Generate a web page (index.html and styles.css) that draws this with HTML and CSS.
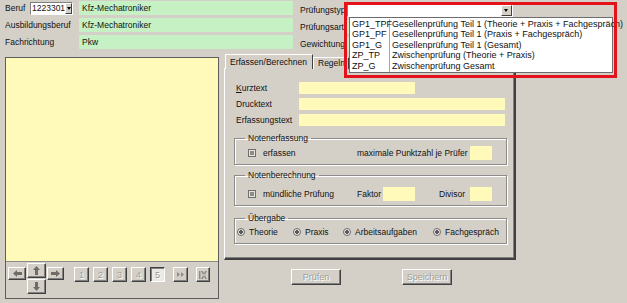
FILE: index.html
```html
<!DOCTYPE html>
<html lang="de">
  <head>
    <meta charset="UTF-8" />
    <title>Prüfungen</title>
    <link rel="stylesheet" href="styles.css">
  </head>
  <body>
    <div class="top">
      <div class="head-left">
        <div class="row">
          <span class="lbl lbl-short">Beruf</span>
          <span class="select">
            <span class="select-val">1223301</span>
            <span class="drop-btn small"><i class="tri"></i></span>
          </span>
          <span class="field green">Kfz-Mechatroniker</span>
        </div>
        <div class="row">
          <span class="lbl">Ausbildungsberuf</span>
          <span class="field green">Kfz-Mechatroniker</span>
        </div>
        <div class="row">
          <span class="lbl">Fachrichtung</span>
          <span class="field green">Pkw</span>
        </div>
      </div>
      <div class="head-right">
        <div class="row">
          <span class="lbl lbl-right">Prüfungstyp</span>
          <div class="combo">
            <span class="combo-val"></span>
            <span class="drop-btn"><i class="tri"></i></span>
            <div class="popup">
              <div class="codes">
                <div>GP1_TPF</div>
                <div>GP1_PF</div>
                <div>GP1_G</div>
                <div>ZP_TP</div>
                <div>ZP_G</div>
              </div>
              <div class="names">
                <div>Gesellenprüfung Teil 1 (Theorie + Praxis + Fachgespräch)</div>
                <div>Gesellenprüfung Teil 1 (Praxis + Fachgespräch)</div>
                <div>Gesellenprüfung Teil 1 (Gesamt)</div>
                <div>Zwischenprüfung (Theorie + Praxis)</div>
                <div>Zwischenprüfung Gesamt</div>
              </div>
            </div>
            <div class="highlight"></div>
          </div>
        </div>
        <div class="row">
          <span class="lbl lbl-right">Prüfungsart</span>
          <span class="field green wide"></span>
        </div>
        <div class="row">
          <span class="lbl lbl-right">Gewichtung</span>
          <span class="field green wide"></span>
        </div>
      </div>
    </div>

    <div class="main">
      <div class="list-panel">
        <div class="list-area"></div>
        <div class="nav">
          <div class="arrows">
            <span class="btn arrow-side">
              <svg width="9" height="7" viewBox="0 0 9 7"><path d="M0 3.5 L4 0 L4 2 L9 2 L9 5 L4 5 L4 7 Z" /></svg>
            </span>
            <span class="arrow-mid">
              <span class="btn arrow-v">
                <svg width="7" height="9" viewBox="0 0 7 9"><path d="M3.5 0 L7 4 L5 4 L5 9 L2 9 L2 4 L0 4 Z" /></svg>
              </span>
              <span class="btn arrow-v">
                <svg width="7" height="9" viewBox="0 0 7 9"><path d="M3.5 9 L7 5 L5 5 L5 0 L2 0 L2 5 L0 5 Z" /></svg>
              </span>
            </span>
            <span class="btn arrow-side right">
              <svg width="9" height="7" viewBox="0 0 9 7"><path d="M9 3.5 L5 0 L5 2 L0 2 L0 5 L5 5 L5 7 Z" /></svg>
            </span>
          </div>
          <div class="pages">
            <span class="btn page">1</span>
            <span class="btn page">2</span>
            <span class="btn page">3</span>
            <span class="btn page">4</span>
            <span class="btn page current">5</span>
          </div>
          <span class="btn tool">
            <svg width="9" height="7" viewBox="0 0 9 7"><path d="M1 1 L4 3.5 L1 6 Z M5 1 L8 3.5 L5 6 Z" /></svg>
          </span>
          <span class="btn tool">
            <svg width="10" height="8" viewBox="0 0 10 8"><path d="M1 0 L2.5 0 L2.5 8 L1 8 Z M3 0 L4.8 0 L9 8 L7.2 8 Z M9 0 L7.2 0 L3 8 L4.8 8 Z" /></svg>
          </span>
        </div>
      </div>

      <div class="editor">
        <div class="tabs">
          <span class="tab active">Erfassen/Berechnen</span>
          <span class="tab">Regeln</span>
        </div>
        <div class="tab-body">
          <div class="frow">
            <span class="flbl"><u>K</u>urztext</span>
            <span class="field yellow short"></span>
          </div>
          <div class="frow">
            <span class="flbl">Drucktext</span>
            <span class="field yellow"></span>
          </div>
          <div class="frow">
            <span class="flbl">Erfassungstext</span>
            <span class="field yellow"></span>
          </div>

          <fieldset class="grp grp-erfassung">
            <legend>Notenerfassung</legend>
            <div class="grp-row">
              <span class="chk"></span>
              <span class="w94">erfassen</span>
              <span class="w113">maximale Punktzahl je Prüfer</span>
              <span class="field yellow tiny"></span>
            </div>
          </fieldset>

          <fieldset class="grp grp-berechnung">
            <legend>Notenberechnung</legend>
            <div class="grp-row">
              <span class="chk"></span>
              <span class="w94">mündliche Prüfung</span>
              <span class="w26">Faktor</span>
              <span class="field yellow mid"></span>
              <span class="w31">Divisor</span>
              <span class="field yellow tiny"></span>
            </div>
          </fieldset>

          <fieldset class="grp grp-uebergabe">
            <legend>Übergabe</legend>
            <div class="radio-row">
              <span class="radio-item r56"><span class="radio"></span>Theorie</span>
              <span class="radio-item r50"><span class="radio"></span>Praxis</span>
              <span class="radio-item r90"><span class="radio"></span>Arbeitsaufgaben</span>
              <span class="radio-item"><span class="radio"></span>Fachgespräch</span>
            </div>
          </fieldset>
        </div>
        <div class="actions">
          <span class="btn action">Prüfen</span>
          <span class="btn action">Speichern</span>
        </div>
      </div>
    </div>
  </body>
</html>
```

FILE: styles.css
```css
* {
  box-sizing: border-box;
}
body {
  margin: 0;
  width: 627px;
  height: 303px;
  overflow: hidden;
  background: #d4d0c8;
  color: #111;
  font-family: "Liberation Sans", Arial, sans-serif;
  font-size: 8.5px;
}

/* kopfbereich */
.top {
  display: flex;
  padding: 1px 0 0 5px;
}
.head-right {
  margin-left: 7px;
  padding-top: 2px;
}
.row {
  display: flex;
  align-items: center;
  height: 14px;
  margin-bottom: 3px;
}
.lbl {
  width: 74px;
}
.lbl-short {
  width: 25px;
}
.lbl-right {
  width: 47px;
}
.field {
  display: inline-block;
  height: 14px;
  line-height: 14px;
  padding-left: 3px;
  width: 214px;
}
.green {
  background: #c6f1c4;
}
.field.wide {
  width: 166px;
}
.select {
  display: flex;
  width: 43px;
  height: 13px;
  margin-right: 6px;
  background: #fff;
  border: 1px solid;
  border-color: #808080 #fff #fff #808080;
}
.select-val {
  flex: 1;
  line-height: 11px;
  padding-left: 1px;
}
.drop-btn {
  position: relative;
  width: 11px;
  height: 11px;
  background: #d4d0c8;
  border: 1px solid;
  border-color: #fff #404040 #404040 #fff;
}
.drop-btn.small {
  width: 8px;
}
.tri {
  position: absolute;
  left: 50%;
  top: 3px;
  margin-left: -2.5px;
  border-left: 2.5px solid transparent;
  border-right: 2.5px solid transparent;
  border-top: 3px solid #000;
}
.drop-btn.small .tri {
  margin-left: -2px;
  border-left-width: 2px;
  border-right-width: 2px;
}
.combo {
  position: relative;
  display: flex;
  width: 166px;
  height: 13px;
  background: #fff;
  border: 1px solid;
  border-color: #808080 #fff #fff #808080;
}
.combo-val {
  flex: 1;
}

/* aufgeklappte liste */
.popup {
  position: absolute;
  top: 12px;
  left: 1px;
  width: 264px;
  height: 56px;
  display: flex;
  background: #fff;
  border: 1px solid #6c6c6c;
  padding-top: 1px;
  line-height: 10.5px;
  font-size: 9px;
  z-index: 5;
}
.codes {
  width: 40px;
  padding-left: 2px;
  border-right: 1px solid #a8a8a8;
}
.names {
  padding-left: 2px;
  white-space: nowrap;
}
.highlight {
  position: absolute;
  left: -4px;
  top: -3px;
  width: 273px;
  height: 76px;
  border: 3px solid #e4121b;
  z-index: 6;
}

/* hauptbereich */
.main {
  display: flex;
  padding-left: 5px;
  margin-top: 1px;
}
.list-panel {
  width: 214px;
  height: 242px;
  margin-top: 2px;
  border: 1px solid #5e5e5e;
}
.list-area {
  height: 204px;
  background: #fffab9;
  border-bottom: 1px solid #8a8a8a;
}
.nav {
  display: flex;
  align-items: flex-start;
  padding-left: 2px;
}
.btn {
  display: inline-flex;
  align-items: center;
  justify-content: center;
  background: #d4d0c8;
  border: 1px solid;
  border-color: #fff #404040 #404040 #fff;
  box-shadow: inset -1px -1px #808080;
  color: #a29e96;
  text-shadow: 1px 1px #fff;
}
.btn svg {
  fill: #6f6c67;
}
.arrows {
  display: flex;
}
.arrow-side {
  width: 18px;
  height: 13px;
  margin-top: 5px;
}
.arrow-side.right {
  width: 17px;
}
.arrow-mid {
  display: flex;
  flex-direction: column;
  margin: 1px 1px 0;
  gap: 1px;
}
.arrow-v {
  width: 19px;
  height: 15px;
}
.pages {
  display: flex;
  gap: 4px;
  margin: 5px 8px 0 10px;
}
.page {
  width: 15px;
  height: 15px;
  font-size: 9px;
}
.page.current {
  background: #ebe9e4;
  border-color: #404040 #fff #fff #404040;
  box-shadow: inset 1px 1px #808080;
  color: #9a968f;
}
.tool {
  width: 17px;
  height: 15px;
  margin: 5px 8px 0 0;
}
.tool svg {
  fill: #8f8b85;
}

/* reiter */
.editor {
  margin-left: 5px;
  width: 292px;
}
.tabs {
  position: relative;
  z-index: 2;
  display: flex;
  align-items: flex-end;
  height: 14px;
  margin-bottom: -1px;
}
.tab {
  height: 12px;
  line-height: 11px;
  padding: 0 3px 0 4px;
  border: 1px solid;
  border-bottom: 0;
  border-color: #fff #404040 transparent #fff;
  background: #d4d0c8;
}
.tab.active {
  height: 15px;
  width: 88px;
  margin-left: 1px;
  padding-top: 2px;
  line-height: 10px;
}
.tab-body {
  height: 192px;
  padding: 13px 7px 0 9px;
  border: 1px solid;
  border-color: #fff #404040 #404040 #fff;
  border-right-width: 2px;
  border-bottom-width: 2px;
  box-shadow: inset -1px -1px #808080;
}
.frow {
  display: flex;
  align-items: center;
  height: 12px;
  margin-bottom: 4px;
  padding-left: 2px;
}
.flbl {
  width: 63px;
}
.yellow {
  background: #fffab9;
}
.frow .field {
  height: 12px;
  width: 206px;
}
.frow .field.short {
  width: 116px;
}

/* gruppen */
.grp {
  margin: 0;
  padding: 0;
  min-inline-size: auto;
  border: 1px solid #8c8c8c;
  box-shadow: 1px 1px 0 #fff, inset 1px 1px 0 #fff;
}
.grp legend {
  margin-left: 10px;
  padding: 0 3px;
  line-height: 10px;
}
.grp-erfassung {
  margin-top: 7px;
  padding: 3px 0 4px;
}
.grp-berechnung {
  margin-top: 5px;
  padding: 7px 0 4px;
}
.grp-uebergabe {
  margin-top: 7px;
  padding: 3px 0 5px;
}
.grp-row {
  display: flex;
  align-items: center;
  height: 14px;
  padding-left: 13px;
}
.grp-row .field {
  height: 14px;
}
.field.tiny {
  width: 22px;
}
.field.mid {
  width: 32px;
  margin-right: 24px;
}
.chk {
  width: 8px;
  height: 8px;
  margin-right: 7px;
  border: 1px solid #6e6e6e;
  background: #8e8a84;
  box-shadow: inset 0 0 0 1px #e6e4df;
}
.w94 {
  width: 94px;
}
.w113 {
  width: 113px;
}
.w26 {
  width: 26px;
}
.w31 {
  width: 31px;
}
.radio-row {
  display: flex;
  align-items: center;
  height: 12px;
  padding-left: 2px;
}
.radio-item {
  display: flex;
  align-items: center;
}
.r56 {
  width: 56px;
}
.r50 {
  width: 50px;
}
.r90 {
  width: 90px;
}
.radio {
  width: 8px;
  height: 8px;
  margin-right: 4px;
  border-radius: 50%;
  border: 1px solid #6e6e6e;
  background: radial-gradient(circle, #5a5a5a 0 1.6px, #e6e4df 2px);
}

/* schaltflaechen */
.actions {
  display: flex;
  margin: 9px 0 0 67px;
  gap: 61px;
}
.action {
  width: 50px;
  height: 16px;
  font-size: 9px;
}
```
